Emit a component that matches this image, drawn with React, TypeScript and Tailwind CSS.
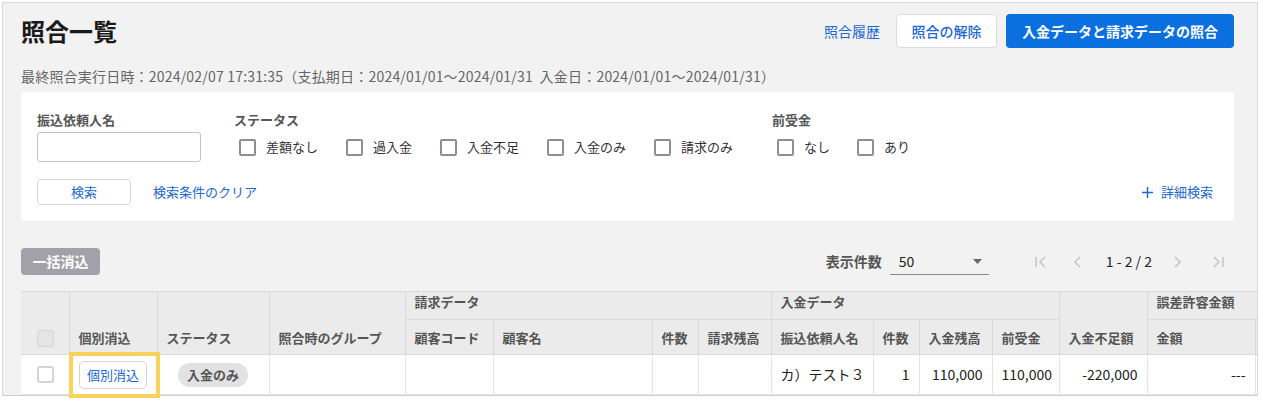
import React from "react";

const statusOptions = ["差額なし", "過入金", "入金不足", "入金のみ", "請求のみ"];
const advanceOptions = ["なし", "あり"];

const Check = ({ label }: { label: string }) => (
  <label className="flex items-center gap-[10px]">
    <span className="w-[17px] h-[17px] border-2 border-[#8e8e96] rounded-[2px] bg-white" />
    <span className="text-[13px] text-[#333]">{label}</span>
  </label>
);

const FirstIcon = () => (
  <svg width="14" height="16" viewBox="0 0 14 16" fill="none" stroke="#c2c2c2" strokeWidth="1.4">
    <path d="M2 3v10" />
    <path d="M11 3 6 8l5 5" />
  </svg>
);
const PrevIcon = () => (
  <svg width="10" height="16" viewBox="0 0 10 16" fill="none" stroke="#c2c2c2" strokeWidth="1.4">
    <path d="M8 3 3 8l5 5" />
  </svg>
);
const NextIcon = () => (
  <svg width="10" height="16" viewBox="0 0 10 16" fill="none" stroke="#c2c2c2" strokeWidth="1.4">
    <path d="M2 3l5 5-5 5" />
  </svg>
);
const LastIcon = () => (
  <svg width="14" height="16" viewBox="0 0 14 16" fill="none" stroke="#c2c2c2" strokeWidth="1.4">
    <path d="M3 3l5 5-5 5" />
    <path d="M12 3v10" />
  </svg>
);

const th = "border border-[#dadada] bg-[#ebebeb] text-left align-bottom px-[9px] pb-[7px] text-[13px] font-bold text-[#555] whitespace-nowrap";
const td = "border border-[#e3e3e3] bg-white px-[9px] text-[14px] text-[#222] whitespace-nowrap";

export default function App() {
  return (
    <div className="min-h-[401px] bg-white pt-[2px] pl-[2px] font-['Noto_Sans_CJK_JP','Noto_Sans',sans-serif]">
      <div className="w-[1256px] border border-[#d9d9d9] border-b-[#cfcfcf] bg-[#f2f2f2] pl-[18px] pr-[23px] pt-[11px] overflow-x-clip">
        {/* Header */}
        <div className="flex items-center justify-between h-[34px]">
          <h1 className="text-[24px] font-bold text-[#1a1a1a] leading-none">照合一覧</h1>
          <div className="flex items-center">
            <a className="text-[14px] text-[#1b67d3] mr-[16px]">照合履歴</a>
            <button className="h-[34px] w-[101px] rounded-[4px] border border-[#dcdcdc] bg-white text-[14px] font-medium text-[#1b67d3]">
              照合の解除
            </button>
            <button className="ml-[9px] h-[34px] w-[228px] rounded-[4px] bg-[#0b70df] text-[14px] font-bold text-white">
              入金データと請求データの照合
            </button>
          </div>
        </div>

        <p className="mt-[19px] text-[14px] leading-[18px] text-[#666] tracking-[0.2px]">
          最終照合実行日時：2024/02/07 17:31:35（支払期日：2024/01/01～2024/01/31&nbsp;&nbsp;入金日：2024/01/01～2024/01/31）
        </p>

        {/* Search panel */}
        <div className="mt-[7px] bg-white rounded-[4px] px-[16px] pt-[19px] pb-[16px]">
          <div className="flex gap-[33px]">
            <div>
              <div className="text-[13px] leading-[18px] font-bold text-[#555]">振込依頼人名</div>
              <input className="mt-[3px] block w-[164px] h-[30px] border border-[#c4c4c4] rounded-[3px] bg-white" />
            </div>
            <div>
              <div className="text-[13px] leading-[18px] font-bold text-[#555]">ステータス</div>
              <div className="mt-[3px] h-[30px] pl-[5px] flex items-center gap-[28px]">
                {statusOptions.map((o) => (
                  <Check key={o} label={o} />
                ))}
              </div>
            </div>
            <div className="ml-[6px]">
              <div className="text-[13px] leading-[18px] font-bold text-[#555]">前受金</div>
              <div className="mt-[3px] h-[30px] pl-[5px] flex items-center gap-[27px]">
                {advanceOptions.map((o) => (
                  <Check key={o} label={o} />
                ))}
              </div>
            </div>
          </div>
          <div className="mt-[17px] flex items-center">
            <button className="w-[94px] h-[26px] rounded-[4px] border border-[#d6d6d6] bg-white text-[13px] text-[#1b67d3]">
              検索
            </button>
            <a className="ml-[22px] text-[13px] text-[#1b67d3]">検索条件のクリア</a>
            <a className="ml-auto mr-[5px] flex items-center gap-[8px] text-[13px] text-[#1b67d3]">
              <svg width="11" height="11" viewBox="0 0 11 11" stroke="#1b67d3" strokeWidth="1.4">
                <path d="M5.5 0v11M0 5.5h11" />
              </svg>
              詳細検索
            </a>
          </div>
        </div>

        {/* Toolbar */}
        <div className="mt-[27px] flex items-center h-[27px]">
          <button className="h-[27px] w-[79px] rounded-[4px] bg-[#a2a1aa] text-[14px] font-bold text-white">一括消込</button>
          <div className="ml-auto flex items-center">
            <span className="text-[14px] font-bold text-[#555]">表示件数</span>
            <div className="ml-[8px] w-[99px] h-[27px] border-b border-[#8a8a8a] flex items-center justify-between pl-[9px] pr-[7px]">
              <span className="text-[14px] text-[#222]">50</span>
              <svg width="9" height="5" viewBox="0 0 9 5">
                <path d="M0 0h9L4.5 5z" fill="#666" />
              </svg>
            </div>
            <div className="ml-[45px] flex items-center">
              <FirstIcon />
              <span className="ml-[24px]"><PrevIcon /></span>
              <span className="ml-[24px] text-[14px] text-[#222]">1 - 2 / 2</span>
              <span className="ml-[21px]"><NextIcon /></span>
              <span className="ml-[28px]"><LastIcon /></span>
            </div>
            <div className="w-[9px]" />
          </div>
        </div>

        {/* Table */}
        <table className="mt-[16px] table-fixed border-collapse w-[1354px]">
          <colgroup>
            <col className="w-[48px]" />
            <col className="w-[88px]" />
            <col className="w-[112px]" />
            <col className="w-[136px]" />
            <col className="w-[88px]" />
            <col className="w-[159px]" />
            <col className="w-[46px]" />
            <col className="w-[73px]" />
            <col className="w-[102px]" />
            <col className="w-[46px]" />
            <col className="w-[73px]" />
            <col className="w-[67px]" />
            <col className="w-[88px]" />
            <col className="w-[108px]" />
            <col className="w-[120px]" />
          </colgroup>
          <thead>
            <tr className="h-[28px]">
              <th rowSpan={2} className={th + " border-l-0 pl-[16px]"}>
                <span className="block w-[17px] h-[17px] rounded-[3px] border border-[#d6d6d6] bg-[#e4e4e4]" />
              </th>
              <th rowSpan={2} className={th}>個別消込</th>
              <th rowSpan={2} className={th}>ステータス</th>
              <th rowSpan={2} className={th}>照合時のグループ</th>
              <th colSpan={4} className={th + " align-middle pb-0"}>請求データ</th>
              <th colSpan={4} className={th + " align-middle pb-0"}>入金データ</th>
              <th rowSpan={2} className={th + " pb-[5px]"}>入金不足額</th>
              <th colSpan={2} className={th + " align-middle pb-0"}>誤差許容金額</th>
            </tr>
            <tr className="h-[35px]">
              <th className={th}>顧客コード</th>
              <th className={th}>顧客名</th>
              <th className={th}>件数</th>
              <th className={th}>請求残高</th>
              <th className={th}>振込依頼人名</th>
              <th className={th}>件数</th>
              <th className={th}>入金残高</th>
              <th className={th}>前受金</th>
              <th className={th}>金額</th>
              <th className={th}></th>
            </tr>
          </thead>
          <tbody>
            <tr className="h-[40px]">
              <td className={td + " border-l-0 pl-[16px]"}>
                <span className="block w-[17px] h-[17px] rounded-[3px] border-2 border-[#d4d4d4] bg-white" />
              </td>
              <td className={td + " relative text-center"}>
                <button className="h-[28px] w-[68px] rounded-[5px] border border-[#d4d4d4] bg-white text-[13px] text-[#1b67d3]">
                  個別消込
                </button>
                <div className="absolute -left-px -top-[3px] -right-[3px] -bottom-[4px] border-[4px] border-[#f8d25a]" />
              </td>
              <td className={td + " text-center"}>
                <span className="inline-flex items-center h-[24px] px-[9px] rounded-full bg-[#e2e2e2] text-[13px] font-bold text-[#555]">
                  入金のみ
                </span>
              </td>
              <td className={td}></td>
              <td className={td}></td>
              <td className={td}></td>
              <td className={td}></td>
              <td className={td}></td>
              <td className={td}>カ）テスト３</td>
              <td className={td + " text-right"}>1</td>
              <td className={td + " text-right"}>110,000</td>
              <td className={td + " text-right"}>110,000</td>
              <td className={td + " text-right"}>-220,000</td>
              <td className={td + " text-right px-[4px]"}>---</td>
              <td className={td}></td>
            </tr>
          </tbody>
        </table>
      </div>
    </div>
  );
}
